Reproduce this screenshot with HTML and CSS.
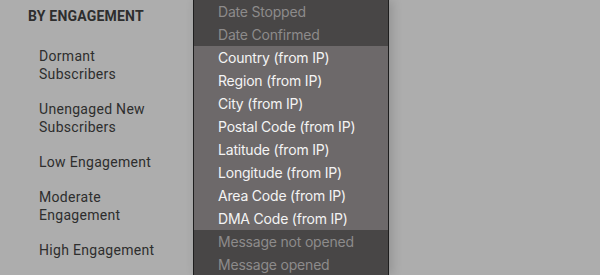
FILE: index.html
```html
<!DOCTYPE html>
<html>
<head>
<meta charset="utf-8">
<link rel="stylesheet" href="styles.css">
</head>
<body>
<div class="page">
  <aside class="side">
    <div class="side-title">BY ENGAGEMENT</div>
    <ul class="side-list">
      <li>Dormant<br>Subscribers</li>
      <li>Unengaged New<br>Subscribers</li>
      <li>Low Engagement</li>
      <li>Moderate<br>Engagement</li>
      <li>High Engagement</li>
    </ul>
  </aside>
  <div class="menu">
    <div class="opt off">Date Stopped</div>
    <div class="opt off">Date Confirmed</div>
    <div class="group">
      <div class="opt">Country (from IP)</div>
      <div class="opt">Region (from IP)</div>
      <div class="opt">City (from IP)</div>
      <div class="opt">Postal Code (from IP)</div>
      <div class="opt">Latitude (from IP)</div>
      <div class="opt">Longitude (from IP)</div>
      <div class="opt">Area Code (from IP)</div>
      <div class="opt">DMA Code (from IP)</div>
    </div>
    <div class="opt off">Message not opened</div>
    <div class="opt off">Message opened</div>
  </div>
  <div class="rest"></div>
</div>
</body>
</html>
```

FILE: styles.css
```css
html, body {
  margin: 0;
  padding: 0;
  height: 100%;
  background: #adadad;
  overflow: hidden;
}
.page {
  display: flex;
  height: 275px;
}
.side {
  width: 193px;
  flex: none;
  font-family: Roboto, "Liberation Sans", sans-serif;
  color: #2e2e2e;
}
.side-title {
  padding: 7px 0 0 28px;
  font-size: 14px;
  line-height: 18px;
  font-weight: 700;
  letter-spacing: 0.2px;
}
.side-list {
  list-style: none;
  margin: 22px 0 0;
  padding: 0 0 0 39px;
  font-size: 14px;
  line-height: 18px;
  letter-spacing: 0.3px;
}
.side-list li {
  margin-bottom: 17px;
}
.menu {
  width: 194px;
  flex: none;
  background: #484646;
  border-left: 1px solid #1e1e1e;
  border-right: 1px solid #1e1e1e;
  font-family: Inter, "Open Sans", sans-serif;
  font-size: 14px;
  letter-spacing: -0.2px;
  box-shadow: 3px 0 10px rgba(0, 0, 0, 0.16);
  position: relative;
  z-index: 1;
}
.group {
  background: #6d696a;
}
.opt {
  height: 23px;
  line-height: 23px;
  padding-left: 24px;
  color: #f4f4f4;
  white-space: nowrap;
}
.opt.off {
  color: #8d8b8b;
}
.rest {
  flex: 1;
}
```
